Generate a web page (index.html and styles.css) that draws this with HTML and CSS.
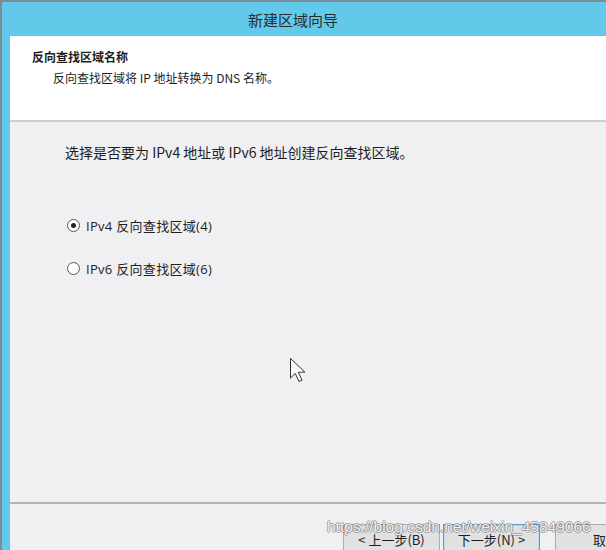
FILE: index.html
```html
<!DOCTYPE html>
<html lang="zh-CN">
<head>
<meta charset="utf-8">
<title>新建区域向导</title>
<link rel="stylesheet" href="styles.css">
</head>
<body>
<div class="window">
  <div class="titlebar"><span class="title">新建区域向导</span></div>
  <div class="frame">
    <div class="client">
      <div class="header">
        <div class="heading">反向查找区域名称</div>
        <div class="subtitle">反向查找区域将 IP 地址转换为 DNS 名称。</div>
      </div>
      <div class="content">
        <p class="prompt">选择是否要为 IPv4 地址或 IPv6 地址创建反向查找区域。</p>
        <div class="options">
          <label class="option"><span class="radio checked"></span>IPv4 反向查找区域(4)</label>
          <label class="option"><span class="radio"></span>IPv6 反向查找区域(6)</label>
        </div>
      </div>
      <div class="footer">
        <button class="btn">&lt; 上一步(B)</button>
        <button class="btn default">下一步(N) &gt;</button>
        <button class="btn cancel">取消</button>
      </div>
    </div>
  </div>
  <svg class="cursor" width="18" height="28" viewBox="0 0 18 28"><path d="M1.5 1.5 L1.5 21 L6.2 16.4 L10 24.5 L13 23.2 L9.3 15.3 L15.8 15 Z" fill="#fff" stroke="#333" stroke-width="1" stroke-linejoin="round"/></svg>
  <div class="watermark">https://blog.csdn.net/weixin_45849066</div>
</div>
</body>
</html>
```
FILE: styles.css
```css
html, body {
  margin: 0;
  padding: 0;
  width: 606px;
  height: 550px;
  overflow: hidden;
  background: #f0eff2;
}
.window {
  position: relative;
  width: 606px;
  height: 550px;
  display: flex;
  flex-direction: column;
  border-top: 2px solid #7a8c95;
  border-left: 2px solid #7a8c95;
  box-sizing: border-box;
  font-family: "Noto Sans CJK SC", "Noto Sans", sans-serif;
  font-size: 12px;
  color: #1e1e1e;
  overflow: hidden;
}
.titlebar {
  height: 34px;
  flex: none;
  background: #63c9eb;
  display: flex;
  align-items: center;
  padding-left: 246px;
}
.title {
  font-size: 15px;
  color: #2b2b2b;
}
.frame {
  flex: 1;
  display: flex;
  border-left: 8px solid #63c9eb;
  min-height: 0;
}
.client {
  flex: 1;
  display: flex;
  flex-direction: column;
  background: #f0eff2;
  min-width: 0;
}
.header {
  height: 86px;
  flex: none;
  background: #ffffff;
  border-bottom: 2px solid #cfcfcf;
  box-sizing: border-box;
  padding: 12px 0 0 22px;
}
.heading {
  font-weight: bold;
  line-height: 18px;
}
.subtitle {
  padding-left: 21px;
  line-height: 18px;
  margin-top: 3px;
}
.content {
  flex: 1;
  padding: 19px 0 0 55px;
}
.prompt {
  margin: 0;
  font-size: 14px;
  line-height: 22px;
}
.options {
  display: flex;
  flex-direction: column;
  gap: 23px;
  margin-top: 52px;
  padding-left: 2px;
}
.option {
  display: flex;
  align-items: center;
  height: 20px;
  font-family: "Open Sans", "Noto Sans CJK SC", sans-serif;
  font-size: 13px;
  letter-spacing: 0.3px;
}
.radio {
  width: 11px;
  height: 11px;
  border: 1px solid #555;
  border-radius: 50%;
  background: #fff;
  margin-right: 6px;
  box-sizing: content-box;
  position: relative;
  flex: none;
}
.radio.checked::after {
  content: "";
  position: absolute;
  left: 3px;
  top: 3px;
  width: 5px;
  height: 5px;
  border-radius: 50%;
  background: #222;
}
.footer {
  flex: none;
  height: 48px;
  border-top: 2px solid #b4b4b4;
  display: flex;
  align-items: flex-start;
  padding: 20px 0 0 333px;
  box-sizing: border-box;
  gap: 3px;
  overflow: hidden;
}
.btn {
  font-family: inherit;
  font-size: 13px;
  color: #1e1e1e;
  width: 97px;
  height: 30px;
  background: #e1e1e1;
  border: 1px solid #adadad;
  padding: 0;
  flex: none;
  white-space: nowrap;
}
.btn.default {
  border-color: #5a9bd5;
  box-shadow: inset 0 0 0 1px #bcd8f0;
}
.btn.cancel {
  margin-left: 12px;
  text-align: left;
  padding-left: 37px;
}
.cursor {
  position: absolute;
  left: 287px;
  top: 355px;
}
.watermark {
  position: absolute;
  left: 325px;
  top: 516px;
  font-family: "Liberation Sans", Arial, sans-serif;
  font-size: 15.5px;
  color: rgba(255, 255, 255, 0.9);
  text-shadow: 1px 0 0 rgba(110, 110, 110, 0.55), -1px 0 0 rgba(110, 110, 110, 0.55), 0 1px 0 rgba(110, 110, 110, 0.55), 0 -1px 0 rgba(110, 110, 110, 0.55);
  white-space: nowrap;
}
```
